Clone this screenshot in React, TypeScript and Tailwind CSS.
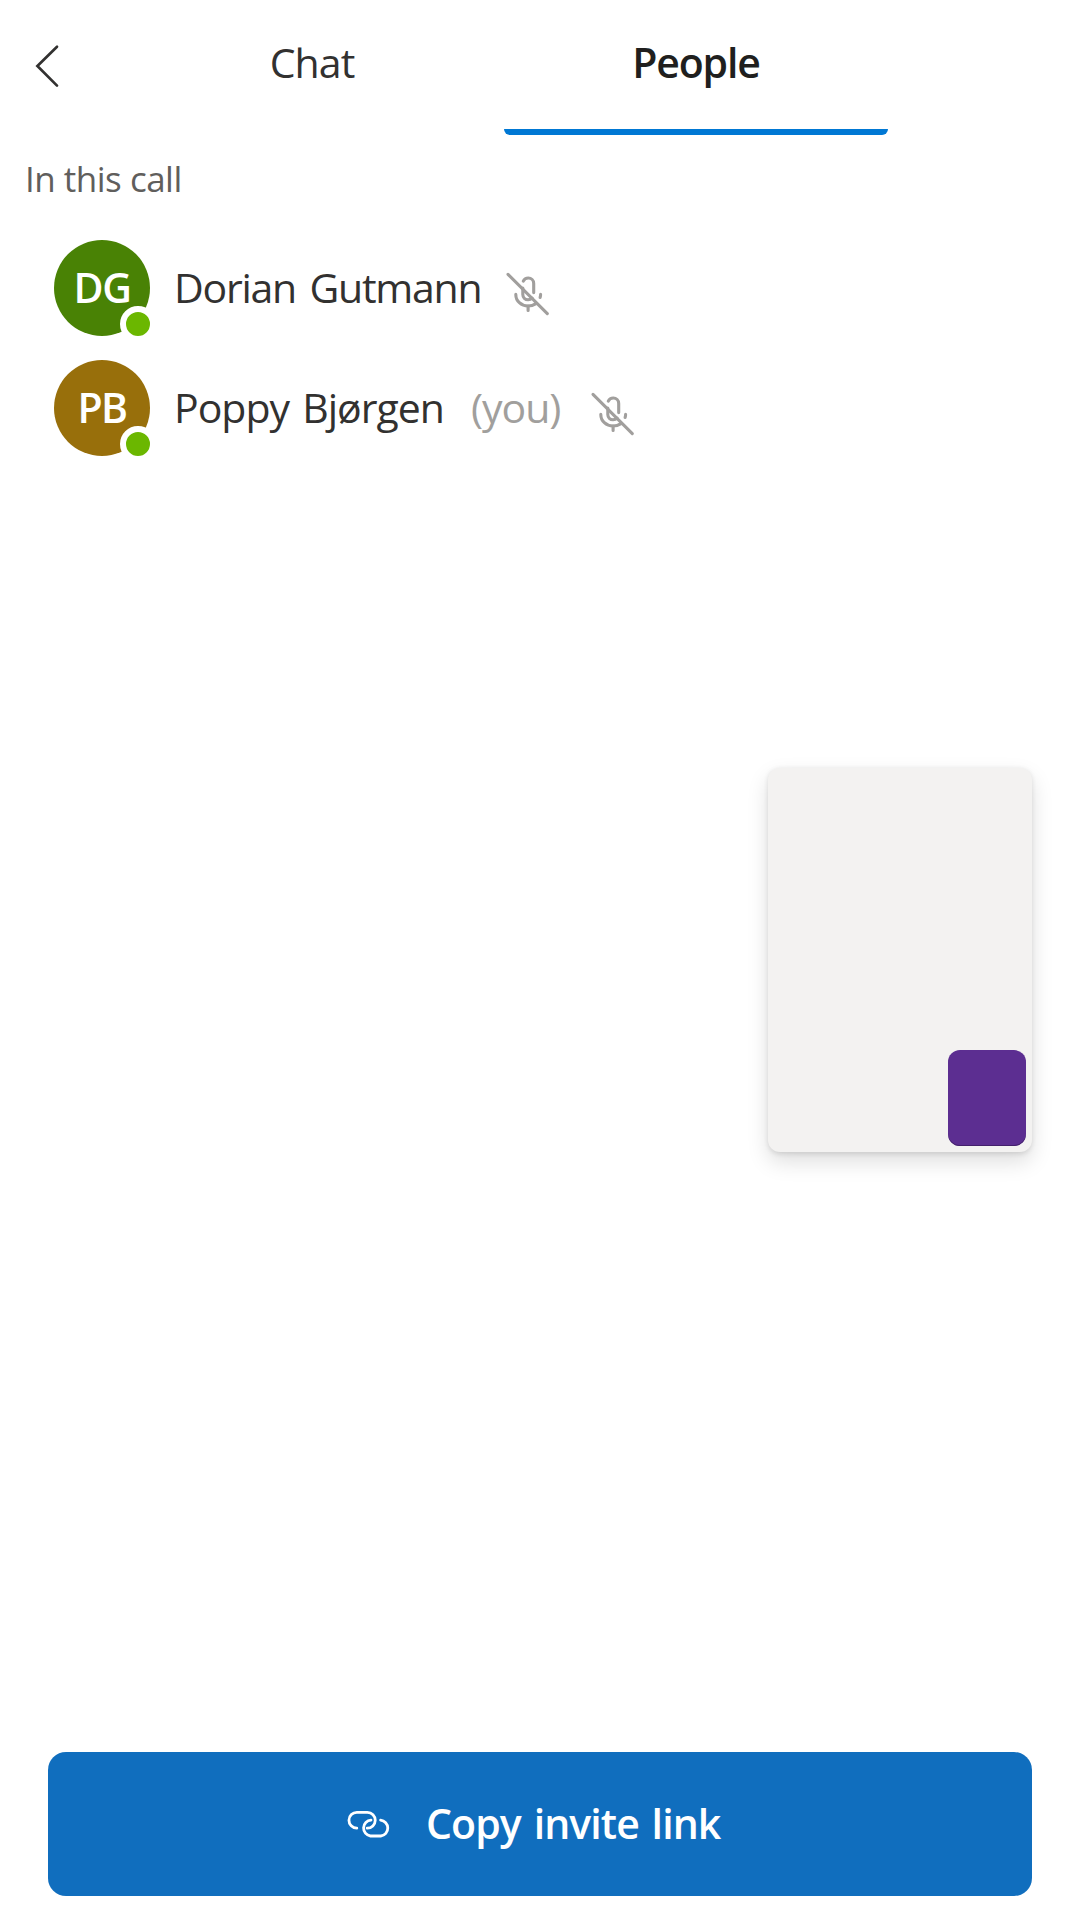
import React from "react";

type Person = {
  name: string;
  initials: string;
  avatar: string;
  initialsStyle: string;
  nameStyle: string;
  micStyle: string;
  you?: boolean;
};

const people: Person[] = [
  {
    name: "Dorian Gutmann",
    initials: "DG",
    avatar: "bg-[#498205]",
    initialsStyle: "tracking-[-1.3px]",
    nameStyle: "tracking-[-1.25px] [word-spacing:4.2px]",
    micStyle: "ml-[22.5px]",
  },
  {
    name: "Poppy Bjørgen",
    initials: "PB",
    avatar: "bg-[#986f0b]",
    initialsStyle: "tracking-[-1.7px]",
    nameStyle: "tracking-[-1px] [word-spacing:3.5px]",
    micStyle: "ml-[28.5px]",
    you: true,
  },
];

function BackIcon() {
  return (
    <svg className="size-12" viewBox="24 42 48 48" fill="none" stroke="#323130" strokeWidth="2.7" strokeLinecap="round">
      <path d="M57 46.8 37.4 66 57 85.6" />
    </svg>
  );
}

function MicOffIcon() {
  return (
    <svg className="size-12 shrink-0" viewBox="504 270 48 48" fill="none" stroke="#a19f9d" strokeWidth="3.1" strokeLinecap="round">
      <path d="M508 274.3 547.3 313.6" />
      <path d="M523.3 281.2C524.2 279.2 526 278 528.3 278c3 0 5.4 2.4 5.4 5.4v9.2" />
      <path d="M522.8 288v6.6c0 3 2.4 5.2 5.3 5.2 1.6 0 3-.6 4-1.6" />
      <path d="M515.8 294.4c0 6.6 5.4 11.6 12.3 11.6 2.8 0 5.3-.7 7.4-2.1" />
      <path d="M528.1 306v4.4M540.6 294.4c0 1.1-.2 2.1-.5 3.1" />
    </svg>
  );
}

function LinkIcon() {
  return (
    <svg className="size-12" viewBox="345 1800 48 48" fill="none" stroke="#ffffff" strokeWidth="2.8" strokeLinecap="round">
      <path d="M356.8 1828.2A7.95 7.95 0 0 1 357 1812.3H367.4A7.95 7.95 0 0 1 367.2 1828.2" />
      <path d="M371 1820.2A7.95 7.95 0 0 0 370.4 1836H380.8A7.95 7.95 0 0 0 380.6 1820.2" />
    </svg>
  );
}

function PersonRow({ person }: { person: Person }) {
  return (
    <li className="flex h-[120px] items-center pl-[54px]">
      <div className={`relative flex size-24 items-center justify-center rounded-full text-[41px] font-semibold text-white ${person.avatar} ${person.initialsStyle}`}>
        {person.initials}
        <span className="absolute -right-1.5 -bottom-1.5 size-9 rounded-full border-6 border-white bg-[#6bb700]" />
      </div>
      <div className="ml-6 flex items-center whitespace-nowrap text-[41px] text-[#323130]">
        <span className={person.nameStyle}>{person.name}</span>
        {person.you && <span className="ml-[27px] tracking-[-1px] text-[#a19f9d]">(you)</span>}
      </div>
      <div className={`mt-3 ${person.micStyle}`}>
        <MicOffIcon />
      </div>
    </li>
  );
}

export default function App() {
  return (
    <div className="relative flex h-[1920px] w-[1080px] flex-col overflow-hidden bg-white font-['Open_Sans',sans-serif]">
      <header className="flex h-[135px]">
        <button className="flex w-[120px] items-start pt-[42px] pl-6" aria-label="Back">
          <BackIcon />
        </button>
        <button className="flex w-96 items-center justify-center pb-[9px] text-[41px] tracking-[-0.92px] text-[#323130]">
          Chat
        </button>
        <button className="flex w-96 flex-col text-[41px] font-semibold tracking-[-1.16px] text-[#201f1e]">
          <span className="flex h-[129px] items-center justify-center self-stretch pb-[3px]">People</span>
          <span className="h-1.5 self-stretch rounded-b-[6px] bg-[#0078d4]" />
        </button>
      </header>

      <h2 className="mt-[19px] pl-[25px] text-[35px] leading-[50px] tracking-[-0.5px] text-[#605e5c]">In this call</h2>

      <ul className="mt-6 flex-1">
        {people.map((p) => (
          <PersonRow key={p.name} person={p} />
        ))}
      </ul>

      <button className="mx-12 mb-6 flex h-36 items-center rounded-[18px] bg-[#106ebe] pl-[297px] text-white">
        <LinkIcon />
        <span className="ml-[33px] text-[41px] font-semibold tracking-[-0.9px] whitespace-nowrap [word-spacing:3px]">Copy invite link</span>
      </button>

      <div className="absolute top-[768px] right-12 flex h-96 w-66 items-end justify-end rounded-xl bg-[#f3f2f1] p-1.5 shadow-[0_9.6px_21.6px_rgba(0,0,0,0.13),0_1.8px_5.4px_rgba(0,0,0,0.11)]">
        <div className="h-24 w-[78px] rounded-xl bg-[#5c2e91] shadow-[inset_0_-1px_0_#43206b]" />
      </div>
    </div>
  );
}
